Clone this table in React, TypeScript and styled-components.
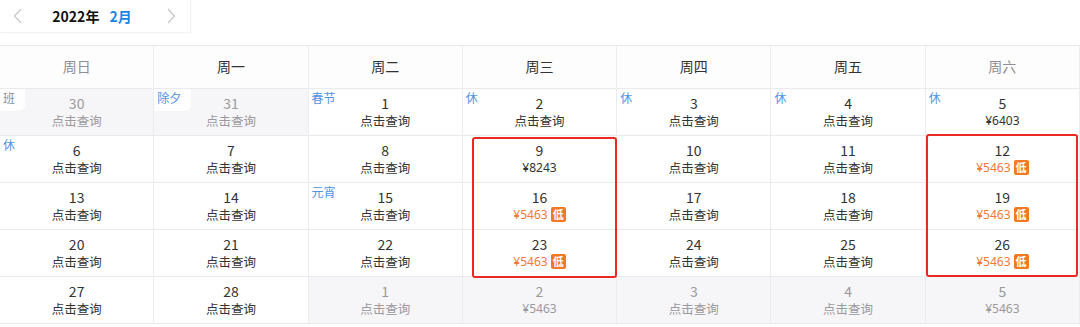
import React from 'react';
import styled, { createGlobalStyle } from 'styled-components';

interface DayCell {
  day: number;
  other?: boolean;
  tag?: string;
  tagGray?: boolean;
  price?: string;
  low?: boolean;
}

const weekNames = ['周日', '周一', '周二', '周三', '周四', '周五', '周六'];

const weeks: DayCell[][] = [
  [
    { day: 30, other: true, tag: '班', tagGray: true },
    { day: 31, other: true, tag: '除夕' },
    { day: 1, tag: '春节' },
    { day: 2, tag: '休' },
    { day: 3, tag: '休' },
    { day: 4, tag: '休' },
    { day: 5, tag: '休', price: '¥6403' },
  ],
  [
    { day: 6, tag: '休' },
    { day: 7 },
    { day: 8 },
    { day: 9, price: '¥8243' },
    { day: 10 },
    { day: 11 },
    { day: 12, price: '¥5463', low: true },
  ],
  [
    { day: 13 },
    { day: 14 },
    { day: 15, tag: '元宵' },
    { day: 16, price: '¥5463', low: true },
    { day: 17 },
    { day: 18 },
    { day: 19, price: '¥5463', low: true },
  ],
  [
    { day: 20 },
    { day: 21 },
    { day: 22 },
    { day: 23, price: '¥5463', low: true },
    { day: 24 },
    { day: 25 },
    { day: 26, price: '¥5463', low: true },
  ],
  [
    { day: 27 },
    { day: 28 },
    { day: 1, other: true },
    { day: 2, other: true, price: '¥5463' },
    { day: 3, other: true },
    { day: 4, other: true },
    { day: 5, other: true, price: '¥5463' },
  ],
];

const GlobalStyle = createGlobalStyle`
  body {
    margin: 0;
    background: #fff;
    font-family: "Noto Sans CJK SC", "Noto Sans", sans-serif;
  }
`;

const Page = styled.div`
  width: 1080px;
  height: 327px;
  overflow: hidden;
  background: #fff;
`;

const Toolbar = styled.div`
  height: 45px;
  display: flex;
  align-items: flex-start;
`;

const MonthSwitch = styled.div`
  width: 191px;
  height: 33px;
  display: flex;
  align-items: center;
  justify-content: space-between;
  padding: 0 12px 0 10px;
  box-sizing: border-box;
  border-right: 1px solid #f0f0f2;
  border-bottom: 1px solid #f3f3f5;
  box-shadow: 1px 1px 2px rgba(0, 0, 0, 0.02);
`;

const Arrow = styled.span`
  display: flex;
  width: 14px;
  justify-content: center;
  color: #c8c8cc;
`;

const Title = styled.div`
  display: flex;
  gap: 10px;
  font-size: 14px;
  font-weight: 700;
  color: #111;
  margin-right: 4px;
`;

const Month = styled.span`
  color: #1b86e3;
`;

const Grid = styled.div`
  display: grid;
  grid-template-columns: repeat(7, 1fr);
  grid-template-rows: 43px repeat(5, 47px);
  border-top: 1px solid #e9e9ee;
`;

const HeadCell = styled.div<{ $weekend: boolean }>`
  display: flex;
  align-items: center;
  justify-content: center;
  font-size: 14px;
  color: ${(p) => (p.$weekend ? '#8e8e93' : '#333')};
  background: #fdfdfd;
  border-right: 1px solid #ececf0;
  border-bottom: 1px solid #e9e9ee;
  padding-bottom: 2px;
  box-sizing: border-box;
`;

const Cell = styled.div<{ $other: boolean; $row: number; $col: number }>`
  grid-row: ${(p) => p.$row};
  grid-column: ${(p) => p.$col};
  position: relative;
  display: flex;
  flex-direction: column;
  align-items: center;
  padding-top: 6px;
  box-sizing: border-box;
  background: ${(p) => (p.$other ? '#f6f5f8' : '#fff')};
  border-right: 1px solid #ececf0;
  border-bottom: 1px solid #e9e9ee;
  color: ${(p) => (p.$other ? '#9a9a9e' : '#333')};
`;

const Tag = styled.span<{ $gray: boolean }>`
  position: absolute;
  top: 0;
  left: 0;
  padding: 1px 10px 5px 3px;
  font-size: 12px;
  line-height: 16px;
  color: ${(p) => (p.$gray ? '#8e8e93' : '#4f93e3')};
  background: rgba(255, 255, 255, 0.85);
  border-bottom-right-radius: 6px;
`;

const DayNum = styled.div`
  font-size: 14px;
  line-height: 17px;
`;

const Sub = styled.div`
  font-size: 12.5px;
  line-height: 17px;
`;

const Price = styled.div<{ $low: boolean; $other: boolean }>`
  display: flex;
  align-items: center;
  gap: 3px;
  font-size: 12px;
  line-height: 17px;
  font-family: "Noto Sans", "Noto Sans CJK SC", sans-serif;
  color: ${(p) => (p.$other ? '#9a9a9e' : p.$low ? '#f27a36' : '#333')};
`;

const LowBadge = styled.span`
  display: inline-flex;
  align-items: center;
  justify-content: center;
  width: 15px;
  height: 15px;
  border-radius: 2px;
  background: #f07a22;
  color: #fff;
  font-size: 11px;
  font-weight: 700;
  font-family: "Noto Sans CJK SC", sans-serif;
`;

const Highlight = styled.div<{ $col: number; $inset: string }>`
  grid-column: ${(p) => p.$col};
  grid-row: 3 / span 3;
  margin: ${(p) => p.$inset};
  border: 2px solid #ea2a22;
  border-radius: 3px;
  pointer-events: none;
  z-index: 2;
`;

const ChevronLeft = () => (
  <svg width="9" height="16" viewBox="0 0 9 16" fill="none">
    <path d="M8 1L1.5 8L8 15" stroke="currentColor" strokeWidth="1.3" />
  </svg>
);

const ChevronRight = () => (
  <svg width="9" height="16" viewBox="0 0 9 16" fill="none">
    <path d="M1 1L7.5 8L1 15" stroke="currentColor" strokeWidth="1.3" />
  </svg>
);

const App = () => {
  return (
    <Page>
      <GlobalStyle />
      <Toolbar>
        <MonthSwitch>
          <Arrow>
            <ChevronLeft />
          </Arrow>
          <Title>
            <span>2022年</span>
            <Month>2月</Month>
          </Title>
          <Arrow>
            <ChevronRight />
          </Arrow>
        </MonthSwitch>
      </Toolbar>
      <Grid>
        {weekNames.map((name, i) => (
          <HeadCell key={name} $weekend={i === 0 || i === 6}>
            {name}
          </HeadCell>
        ))}
        {weeks.map((week, r) =>
          week.map((d, c) => (
            <Cell key={`${r}-${c}`} $other={!!d.other} $row={r + 2} $col={c + 1}>
              {d.tag && <Tag $gray={!!d.tagGray}>{d.tag}</Tag>}
              <DayNum>{d.day}</DayNum>
              {d.price ? (
                <Price $low={!!d.low} $other={!!d.other}>
                  {d.price}
                  {d.low && <LowBadge>低</LowBadge>}
                </Price>
              ) : (
                <Sub>点击查询</Sub>
              )}
            </Cell>
          ))
        )}
        <Highlight $col={4} $inset="1px 0 -1px 9px" />
        <Highlight $col={7} $inset="-2px 2px 0 0" />
      </Grid>
    </Page>
  );
};

export default App;
